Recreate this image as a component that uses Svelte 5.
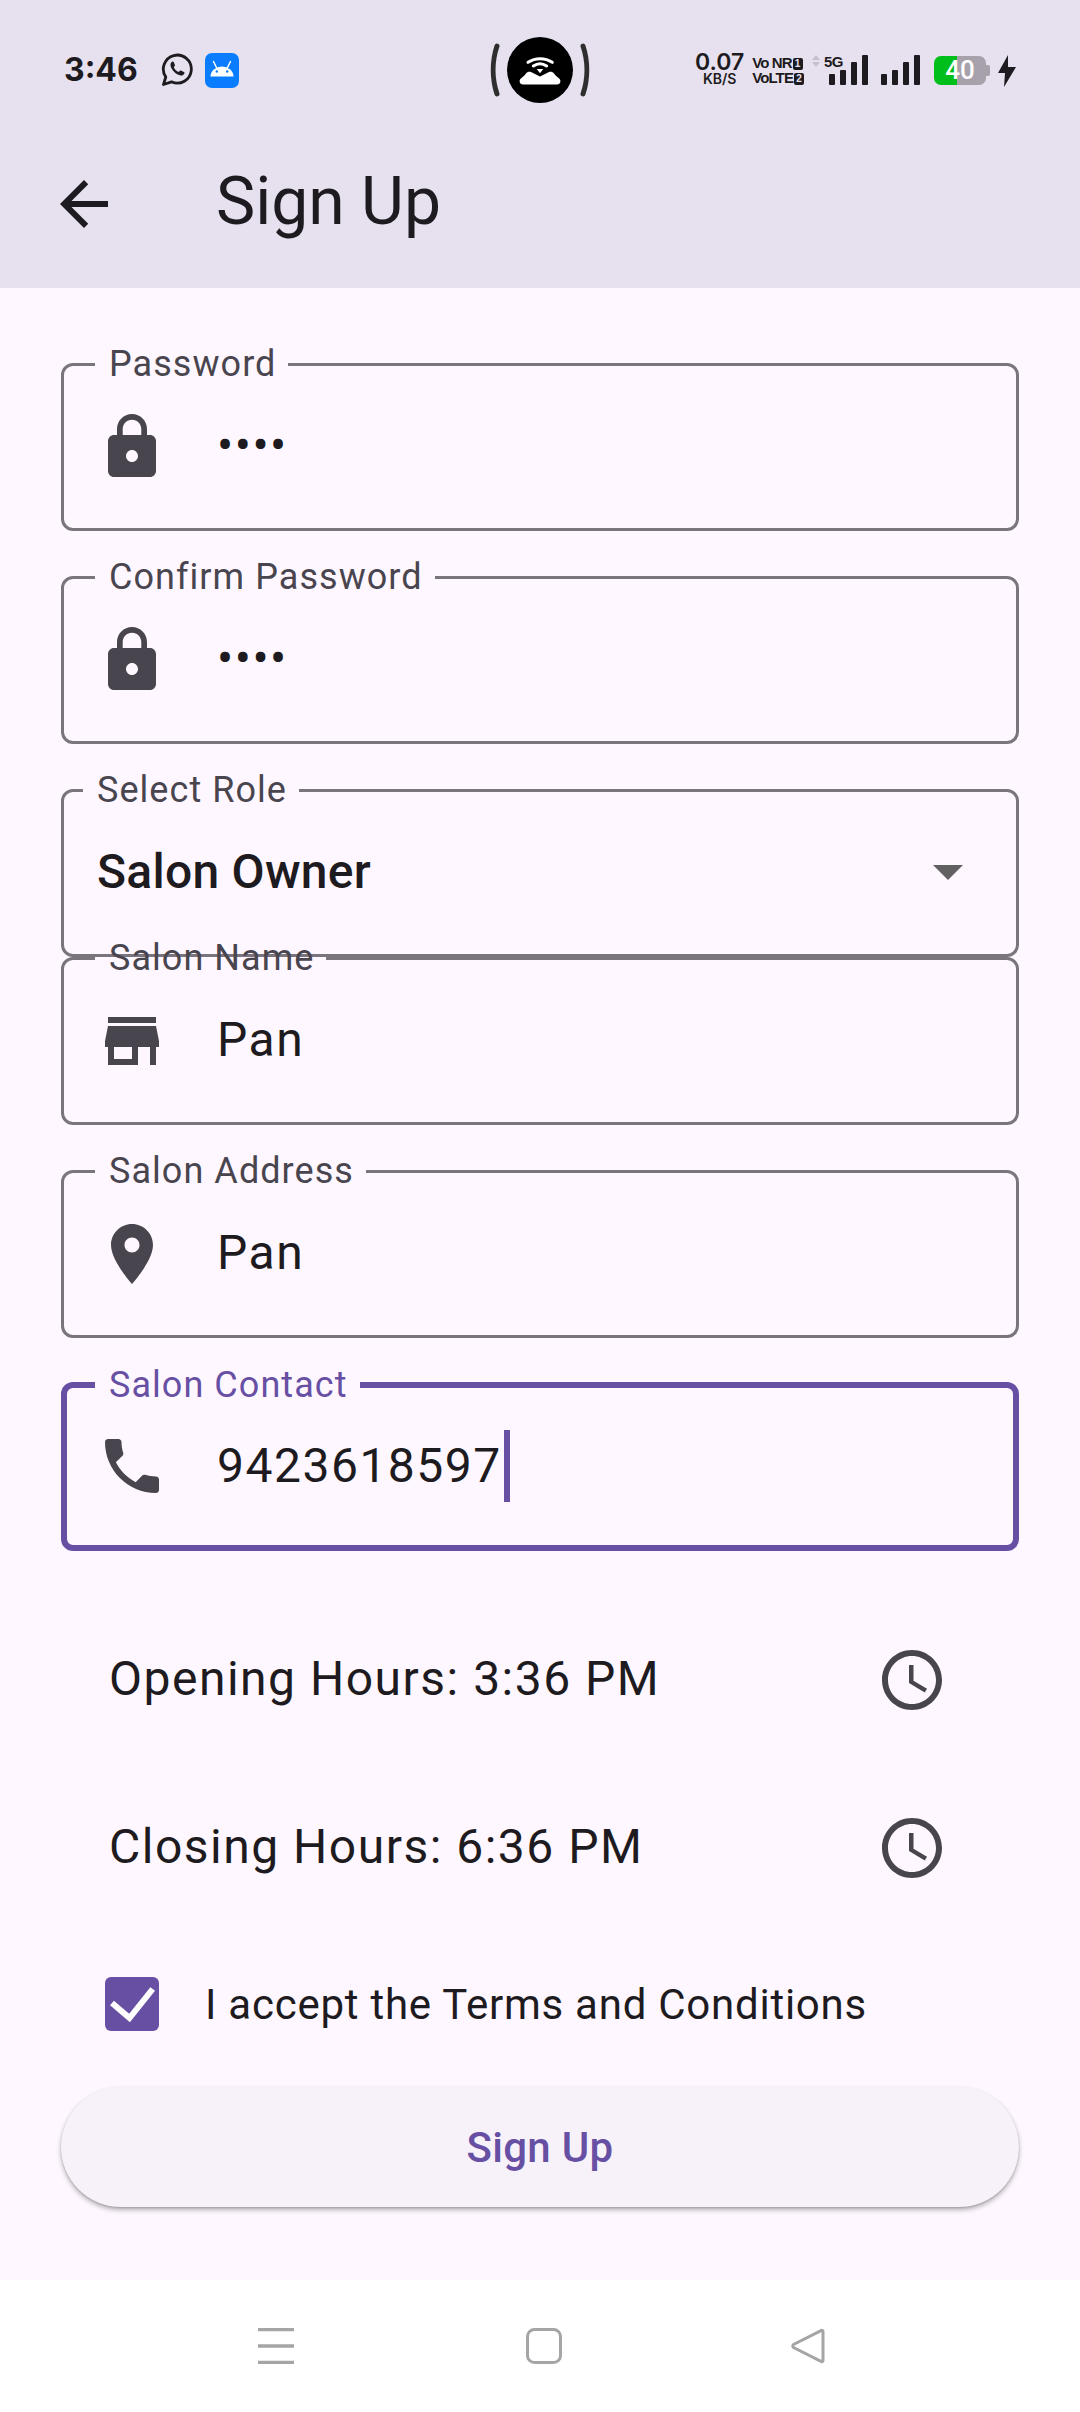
<script>
  const fields = [
    { label: 'Password', value: '••••', icon: 'lock', gap: 25 },
    { label: 'Confirm Password', value: '••••', icon: 'lock', gap: 25 },
    { label: 'Select Role', value: 'Salon Owner', select: true, gap: -20 },
    { label: 'Salon Name', value: 'Pan', icon: 'store', gap: 25 },
    { label: 'Salon Address', value: 'Pan', icon: 'place', gap: 26 },
    { label: 'Salon Contact', value: '9423618597', icon: 'phone', focused: true, gap: 0 }
  ];

  const icons = {
    lock: 'M18 8h-1V6c0-2.76-2.24-5-5-5S7 3.24 7 6v2H6c-1.1 0-2 .9-2 2v10c0 1.1.9 2 2 2h12c1.1 0 2-.9 2-2V10c0-1.1-.9-2-2-2zm-6 9c-1.1 0-2-.9-2-2s.9-2 2-2 2 .9 2 2-.9 2-2 2zm3.1-9H8.9V6c0-1.71 1.39-3.1 3.1-3.1 1.71 0 3.1 1.39 3.1 3.1v2z',
    store: 'M20 4H4v2h16V4zm1 10v-2l-1-5H4l-1 5v2h1v6h10v-6h4v6h2v-6h1zm-9 4H6v-4h6v4z',
    place: 'M12 2C8.13 2 5 5.13 5 9c0 5.25 7 13 7 13s7-7.75 7-13c0-3.87-3.13-7-7-7zm0 9.5c-1.38 0-2.5-1.12-2.5-2.5s1.12-2.5 2.5-2.5 2.5 1.12 2.5 2.5-1.12 2.5-2.5 2.5z',
    phone: 'M6.62 10.79c1.44 2.83 3.76 5.14 6.59 6.59l2.2-2.2c.27-.27.67-.36 1.02-.24 1.12.37 2.33.57 3.57.57.55 0 1 .45 1 1V20c0 .55-.45 1-1 1-9.39 0-17-7.61-17-17 0-.55.45-1 1-1h3.5c.55 0 1 .45 1 1 0 1.25.2 2.45.57 3.57.11.35.03.74-.25 1.02l-2.2 2.2z'
  };
  const clock = 'M11.99 2C6.47 2 2 6.48 2 12s4.47 10 9.99 10C17.52 22 22 17.52 22 12S17.52 2 11.99 2zM12 20c-4.42 0-8-3.58-8-8s3.58-8 8-8 8 3.58 8 8-3.58 8-8 8zm.5-13H11v6l5.25 3.15.75-1.23-4.5-2.67z';

  const hours = ['Opening Hours: 3:36 PM', 'Closing Hours: 6:36 PM'];
  const bars = [11, 15, 23, 30];
</script>

<div class="screen">
  <header class="top">
    <div class="status">
      <div class="status-left">
        <span class="time">3:46</span>
        <svg class="wa" viewBox="0 0 32 34" width="32" height="34">
          <path d="M2.500 31.500l2.300-7.500A14 14 0 1 1 10.500 28.800z" fill="none" stroke="#1d1b20" stroke-width="2.800" stroke-linejoin="round"/>
          <path d="M11.500 8.500c-1 .3-2.200 1.800-2 3.800.4 4.200 5.800 9.800 10.200 10.200 2 .2 3.500-1 3.800-2.300.1-.6-.1-1-.6-1.200l-3-1.400c-.5-.2-.9-.1-1.200.3l-1 1.200c-2.200-.9-4-2.700-5-4.900l1-1.100c.3-.4.300-.7.200-1.100l-1.200-2.900c-.2-.5-.9-.7-1.200-.6z" fill="#1d1b20"/>
        </svg>
        <svg class="droid" viewBox="0 0 34 35" width="34" height="35">
          <rect width="34" height="35" rx="7" fill="#0a7cff"/>
          <path d="M5.500 23.500a11.500 10 0 0 1 23 0z" fill="#fff"/>
          <path d="M8.500 8.500l3 6M25.500 8.500l-3 6" stroke="#fff" stroke-width="1.500" stroke-linecap="round"/>
          <circle cx="11.800" cy="18.500" r="1.200" fill="#0a7cff"/>
          <circle cx="22.200" cy="18.500" r="1.200" fill="#0a7cff"/>
        </svg>
      </div>

      <svg class="hotspot" viewBox="0 0 100 68" width="100" height="68">
        <path d="M7 10c-5 15-5 33 0 48M93 10c5 15 5 33 0 48" fill="none" stroke="#2e2e2e" stroke-width="5" stroke-linecap="round"/>
        <circle cx="50" cy="34" r="33" fill="#000"/>
        <path d="M38 26.300a22 22 0 0 1 24.300 0M43.300 30a12 12 0 0 1 13.400 0" fill="none" stroke="#fff" stroke-width="3" stroke-linecap="round"/>
        <path d="M46.700 33h6.600L50 37.300z" fill="#fff"/>
        <path d="M33 48.500c-3 0-4-3-3-5 1-2 4-3 6-6 1-1.500 3-2 5-1.500l9 4.500 9-4.500c2-.5 4 0 5 1.500 2 3 5 4 6 6 1 2 0 5-3 5z" fill="#fff"/>
      </svg>

      <div class="status-right">
        <div class="speed"><span class="speed-num">0.07</span><span class="speed-unit">KB/S</span></div>
        <div class="volte"><span>Vo NR<b>1</b></span><span>VoLTE<b>2</b></span></div>
        <div class="signal five-g">
          <svg class="updown" viewBox="0 0 8 12" width="8" height="12"><path d="M4 0l4 5H0zM4 12l4-5H0z" fill="#c3bfcb"/></svg>
          <span class="net">5G</span>
          {#each bars as b}<i style="height:{b}px"></i>{/each}
        </div>
        <div class="signal">
          {#each bars as b}<i style="height:{b}px"></i>{/each}
        </div>
        <div class="battery"><span>40</span></div>
        <svg class="bolt" viewBox="0 0 18 32" width="18" height="32"><path d="M10 0L0 18h7l-1 14L18 12h-8z" fill="#1d1b20"/></svg>
      </div>
    </div>

    <div class="appbar">
      <svg viewBox="0 0 24 24" width="72" height="72"><path d="M20 11H7.830l5.590-5.590L12 4l-8 8 8 8 1.410-1.410L7.830 13H20v-2z" fill="#1d1b20"/></svg>
      <h1>Sign Up</h1>
    </div>
  </header>

  <main class="form">
    {#each fields as f}
      <fieldset class="field" class:focused={f.focused} class:select={f.select} style="margin-bottom:{f.gap}px">
        <legend>{f.label}</legend>
        <div class="row">
          {#if f.icon}
            <svg class="icon" viewBox="0 0 24 24" width="72" height="72"><path d={icons[f.icon]} fill="#49454f"/></svg>
          {/if}
          <span class="value">{f.value}</span>
          {#if f.focused}<span class="caret"></span>{/if}
          {#if f.select}<span class="arrow"></span>{/if}
        </div>
      </fieldset>
    {/each}

    <div class="hours">
      {#each hours as h}
        <div class="hour">
          <span>{h}</span>
          <svg viewBox="0 0 24 24" width="72" height="72"><path d={clock} fill="#49454f"/></svg>
        </div>
      {/each}
    </div>

    <div class="terms">
      <span class="checkbox">
        <svg viewBox="0 0 54 54" width="54" height="54"><path d="M7 26l17.500 15L47.700 12" fill="none" stroke="#fff" stroke-width="6"/></svg>
      </span>
      <span>I accept the Terms and Conditions</span>
    </div>

    <button class="submit" type="button">Sign Up</button>
  </main>

  <nav class="navbar">
    <svg viewBox="0 0 36 36" width="36" height="36">
      <path d="M0 1.500h36M0 18h36M0 34.500h36" stroke="#a5a5a5" stroke-width="3.500"/>
    </svg>
    <svg viewBox="0 0 36 36" width="36" height="36">
      <rect x="1.500" y="1.500" width="33" height="33" rx="7" fill="none" stroke="#a5a5a5" stroke-width="3"/>
    </svg>
    <svg class="nav-back" viewBox="0 0 36 36" width="36" height="36">
      <path d="M33 3.500v29c0 1-1 1.500-2 .8L3.500 19.500c-1-.8-1-2 0-3L31 2.700c1-.7 2-.2 2 .8z" fill="none" stroke="#a5a5a5" stroke-width="3" stroke-linejoin="round"/>
    </svg>
  </nav>
</div>

<style>
  :global(body) {
    margin: 0;
    background: #fef7ff;
  }

  .screen {
    width: 1080px;
    height: 2412px;
    display: flex;
    flex-direction: column;
    font-family: Roboto, sans-serif;
    color: #1d1b20;
    overflow: hidden;
  }

  .top {
    height: 288px;
    flex-shrink: 0;
    background: #e7e1ef;
  }

  .status {
    height: 140px;
    padding: 0 64px 0 64px;
    box-sizing: border-box;
    display: grid;
    grid-template-columns: 1fr auto 1fr;
    align-items: center;
  }

  .status-left {
    display: flex;
    align-items: center;
  }

  .time {
    font-family: Inter, sans-serif;
    font-size: 32px;
    font-weight: 700;
    width: 97px;
    margin-top: -2px;
  }

  .wa {
    margin-right: 12px;
  }

  .status-right {
    display: flex;
    align-items: flex-end;
    justify-content: flex-end;
    height: 30px;
  }

  .speed {
    display: flex;
    flex-direction: column;
    align-items: center;
    font-family: Inter, sans-serif;
    font-weight: 600;
    margin: -2px 8px 0 0;
    align-self: flex-start;
  }

  .speed-num {
    font-size: 23px;
    line-height: 19px;
  }

  .speed-unit {
    font-size: 14px;
    line-height: 13px;
  }

  .volte {
    display: flex;
    flex-direction: column;
    align-self: flex-start;
    font-family: "Liberation Sans", sans-serif;
    font-size: 15px;
    font-weight: 700;
    line-height: 15px;
    letter-spacing: -0.9px;
    margin-right: 25px;
  }

  .volte b {
    display: inline-block;
    background: #1d1b20;
    color: #e7e1ef;
    font-size: 10px;
    line-height: 12px;
    width: 10px;
    text-align: center;
    margin-left: 1px;
    letter-spacing: 0;
    border-radius: 2px;
    vertical-align: 1px;
  }

  .signal {
    position: relative;
    display: flex;
    align-items: flex-end;
    gap: 5px;
    margin-right: 13px;
  }

  .signal i {
    width: 6px;
    background: #1d1b20;
    border-radius: 1px;
  }

  .updown {
    position: absolute;
    left: -17px;
    top: 0;
  }

  .net {
    position: absolute;
    left: -5px;
    top: -1px;
    font-family: "Liberation Sans", sans-serif;
    font-size: 15px;
    line-height: 15px;
    font-weight: 700;
    letter-spacing: -0.5px;
  }

  .battery {
    position: relative;
    width: 52px;
    height: 29px;
    background: linear-gradient(90deg, #00bf1a 23px, #a7a1ac 23px);
    border-radius: 7px;
    margin: 0 12px 0 1px;
    color: #fff;
    font-size: 26px;
    font-weight: 500;
    line-height: 29px;
    text-align: center;
  }

  .battery::after {
    content: "";
    position: absolute;
    right: -4px;
    top: 9px;
    width: 4px;
    height: 11px;
    background: #a7a1ac;
    border-radius: 0 2px 2px 0;
  }

  .bolt {
    margin-bottom: -2px;
    flex-shrink: 0;
  }

  .appbar {
    height: 128px;
    padding-left: 48px;
    display: flex;
    align-items: center;
  }

  .appbar h1 {
    margin: -5px 0 0 96px;
    font-size: 66px;
    font-weight: 400;
  }

  .form {
    flex: 1;
    padding: 55px 61px 0;
    display: flex;
    flex-direction: column;
  }

  .field {
    margin: 0;
    padding: 0;
    min-width: 0;
    border: 3px solid #79747e;
    border-radius: 12px;
  }

  .field legend {
    margin-left: 31px;
    padding: 0 12px 0 14px;
    height: 42px;
    font-size: 36px;
    line-height: 42px;
    letter-spacing: 1.05px;
    color: #49454f;
  }

  .field.select legend {
    margin-left: 19px;
  }

  .field.focused {
    border: 6px solid #6750a4;
  }

  .field.focused legend {
    margin-left: 28px;
    color: #6750a4;
  }

  .row {
    height: 143px;
    display: flex;
    align-items: center;
    padding-left: 32px;
    padding-bottom: 20px;
    box-sizing: border-box;
  }

  .focused .row {
    padding-left: 29px;
    padding-bottom: 20px;
    height: 139px;
  }

  .icon {
    margin-right: 49px;
  }

  .value {
    font-size: 48px;
    letter-spacing: 1.5px;
    margin-top: -2px;
  }

  .focused .value {
    margin-top: 0;
  }

  .select .row {
    padding-left: 33px;
  }

  .select .value {
    font-weight: 500;
    letter-spacing: 0.25px;
    flex: 1;
  }

  .caret {
    width: 6px;
    height: 72px;
    margin-left: 2px;
    background: #6750a4;
  }

  .arrow {
    width: 0;
    height: 0;
    margin-right: 53px;
    border-left: 15px solid transparent;
    border-right: 15px solid transparent;
    border-top: 15px solid #616161;
  }

  .hours {
    margin-top: 43px;
    display: flex;
    flex-direction: column;
  }

  .hour {
    height: 168px;
    padding: 0 71px 0 48px;
    display: flex;
    align-items: center;
    justify-content: space-between;
    font-size: 48px;
    letter-spacing: 1.5px;
  }

  .hour svg {
    margin-top: 3px;
  }

  .terms {
    margin-top: 38px;
    height: 72px;
    padding-left: 44px;
    display: flex;
    align-items: center;
    gap: 46px;
    font-size: 42px;
    letter-spacing: 0.75px;
  }

  .checkbox {
    width: 54px;
    height: 54px;
    border-radius: 6px;
    background: #6750a4;
  }

  .checkbox svg {
    display: block;
  }

  .submit {
    margin-top: 47px;
    height: 120px;
    border: 0;
    border-radius: 60px;
    background: #f7f2fa;
    color: #6750a4;
    font-family: Roboto, sans-serif;
    font-size: 42px;
    font-weight: 500;
    letter-spacing: 0.3px;
    box-shadow: 0 3px 5px rgba(0, 0, 0, 0.28), 0 1px 2px rgba(0, 0, 0, 0.15);
  }

  .navbar {
    height: 132px;
    flex-shrink: 0;
    background: #fff;
    display: flex;
    justify-content: center;
    align-items: flex-start;
    padding: 48px 0 0 4px;
    box-sizing: border-box;
    gap: 232px;
  }

  .nav-back {
    margin-left: -4px;
  }
</style>
